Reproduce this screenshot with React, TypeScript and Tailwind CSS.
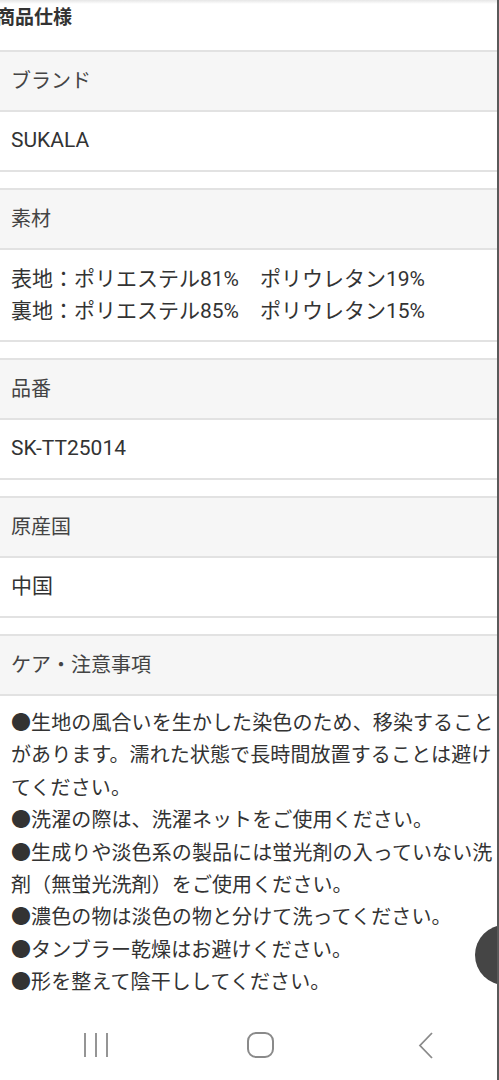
import React from "react";

const FONT = { fontFamily: 'Roboto, "Noto Sans CJK JP", "Noto Sans", sans-serif' };

function Section({ label, children, valueClass }: { label: string; children: React.ReactNode; valueClass: string }) {
  return (
    <div className="border-t-2 border-[#e2e2e2]">
      <div className="h-[60px] bg-[#f6f6f6] flex items-center pl-[11px] text-[20px] text-[#444] border-b-2 border-[#e2e2e2]">
        {label}
      </div>
      <div className={"bg-white pl-[11px] text-[21px] text-[#333] border-b-2 border-[#e2e2e2] " + valueClass}>
        {children}
      </div>
    </div>
  );
}

export default function App() {
  const care = [
    "●生地の風合いを生かした染色のため、移染すること",
    "があります。濡れた状態で長時間放置することは避け",
    "てください。",
    "●洗濯の際は、洗濯ネットをご使用ください。",
    "●生成りや淡色系の製品には蛍光剤の入っていない洗",
    "剤（無蛍光洗剤）をご使用ください。",
    "●濃色の物は淡色の物と分けて洗ってください。",
    "●タンブラー乾燥はお避けください。",
    "●形を整えて陰干ししてください。",
  ];
  return (
    <div className="w-[499px] h-[1080px] bg-white overflow-hidden relative flex" style={FONT}>
      <div className="w-[497px] h-full flex flex-col">
        <div className="h-[50px] pt-[5px] pl-0 -ml-[4px] text-[19px] leading-[26px] font-bold text-[#333] whitespace-nowrap">
          商品仕様
        </div>
        <Section label="ブランド" valueClass="h-[60px] flex items-center">SUKALA</Section>
        <div className="h-[16px]" />
        <Section label="素材" valueClass="h-[92px] pt-[13px] leading-[32px] whitespace-nowrap">
          <div>表地：ポリエステル81%　ポリウレタン19%</div>
          <div>裏地：ポリエステル85%　ポリウレタン15%</div>
        </Section>
        <div className="h-[16px]" />
        <Section label="品番" valueClass="h-[60px] flex items-center">SK-TT25014</Section>
        <div className="h-[16px]" />
        <Section label="原産国" valueClass="h-[60px] flex items-center">中国</Section>
        <div className="h-[16px]" />
        <div className="border-t-2 border-[#e2e2e2]">
          <div className="h-[60px] bg-[#f6f6f6] flex items-center pl-[11px] text-[20px] text-[#444] border-b-2 border-[#e2e2e2]">
            ケア・注意事項
          </div>
          <div className="pl-[11px] pt-[11px] text-[20px] leading-[32.4px] text-[#333] whitespace-nowrap tracking-[0.1px]">
            {care.map((l, i) => (
              <div key={i}>{l}</div>
            ))}
          </div>
        </div>
        <div className="mt-auto h-[70px] bg-white flex items-center pl-[82px]">
          <svg width="28" height="26" viewBox="0 0 28 26">
            <path d="M3 1v24M14 1v24M25 1v24" stroke="#8a8a8a" strokeWidth="1.8" fill="none" />
          </svg>
          <svg width="28" height="27" viewBox="0 0 28 27" className="ml-[137px]">
            <rect x="1" y="1" width="25" height="24" rx="8" stroke="#8a8a8a" strokeWidth="2" fill="none" />
          </svg>
          <svg width="18" height="27" viewBox="0 0 18 27" className="ml-[142px]">
            <path d="M15 1L3 13.5L15 26" stroke="#8a8a8a" strokeWidth="1.8" fill="none" />
          </svg>
        </div>
      </div>
      <div className="w-[2px] h-full bg-[#5a5a5a]" />
      <div className="absolute top-0 left-0 w-[497px] h-[4px] bg-gradient-to-b from-[#e6e6e6] to-transparent" />
      <div className="absolute left-[475px] top-[925px] w-[60px] h-[60px] rounded-full bg-[#454545]" />
      <div className="absolute left-[497px] top-0 w-[2px] h-full bg-[#5a5a5a]" />
    </div>
  );
}
